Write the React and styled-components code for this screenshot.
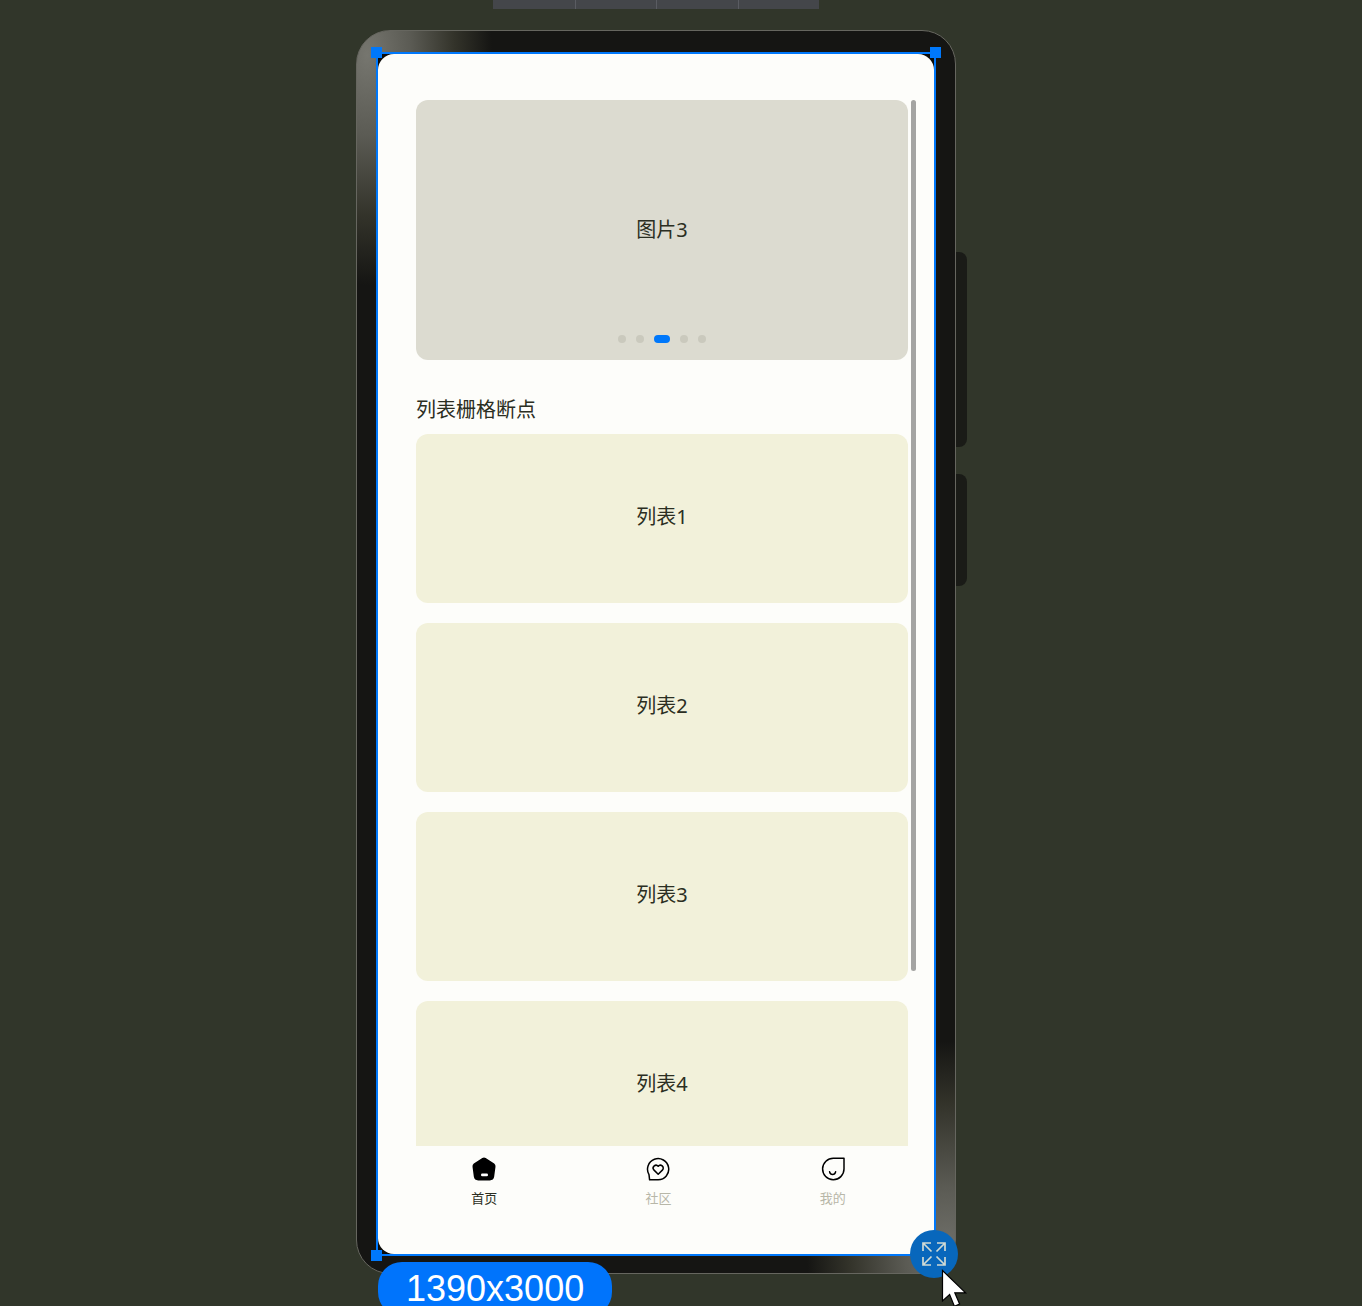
import React, { useState } from 'react';
import styled, { createGlobalStyle, css } from 'styled-components';

const colors = {
	canvas: '#31362a',
	frame: '#151513',
	frameEdge: '#66665f',
	screen: '#fdfdfa',
	banner: '#dcdbd0',
	item: '#f2f1da',
	text: '#2b2e22',
	muted: '#b8b7a8',
	select: '#0078fb',
};

const GlobalStyle = createGlobalStyle`
	* {
		box-sizing: border-box;
	}

	body {
		margin: 0;
		background: ${colors.canvas};
		font-family: 'Noto Sans', 'Noto Sans CJK SC', sans-serif;
		color: ${colors.text};
	}

	button {
		border: 0;
		padding: 0;
		background: none;
		color: inherit;
		font: inherit;
	}
`;

const Canvas = styled.main`
	display: flex;
	flex-direction: column;
	align-items: center;
	gap: 21px;
	height: 100vh;
	padding-right: 50px;
	overflow: hidden;
	background: ${colors.canvas};
`;

const TopBar = styled.div`
	display: grid;
	flex: none;
	grid-template-columns: repeat(4, 1fr);
	width: 326px;
	height: 9px;
	background: #44464a;
`;

const TopBarCell = styled.div`
	& + & {
		border-left: 1px solid #5a5c62;
	}
`;

const Phone = styled.div`
	position: relative;
	flex: none;
	width: 600px;
	max-width: 100%;
	padding: 21px 19px 17px;
	border: 1px solid ${colors.frameEdge};
	border-radius: 34px;
	background: radial-gradient(
			ellipse 125px 230px at 10px 24px,
			#76766f 0%,
			#5b5b54 35%,
			#33332a 70%,
			transparent 100%
		),
		radial-gradient(
			ellipse 140px 210px at 590px 1220px,
			#70706a 0%,
			#5b5b54 30%,
			#33332a 70%,
			transparent 100%
		),
		${colors.frame};
`;

const SideKey = styled.span`
	position: absolute;
	left: 100%;
	top: ${({ $top }) => $top}px;
	width: 12px;
	height: ${({ $length }) => $length}px;
	border-left: 1px solid ${colors.frameEdge};
	border-radius: 0 8px 8px 0;
	background: #1a1b17;
`;

const Selection = styled.div`
	position: relative;
	border: 2px solid ${colors.select};
	background: #0c0c0a;
`;

const Handle = styled.span`
	position: absolute;
	width: 11px;
	height: 11px;
	background: ${colors.select};

	${({ $corner }) => {
		const [v, h] = $corner.split(' ');

		return css`
			${v}: -7px;
			${h}: -7px;
		`;
	}}
`;

const Screen = styled.div`
	display: flex;
	flex-direction: column;
	width: 100%;
	aspect-ratio: 1390 / 3000;
	overflow: hidden;
	border-radius: 16px;
	background: ${colors.screen};
`;

const Content = styled.div`
	position: relative;
	flex: 1;
	min-height: 0;
	padding: 46px 26px 0 38px;
	overflow: hidden;
`;

const ScrollThumb = styled.span`
	position: absolute;
	top: 46px;
	right: 18px;
	width: 5px;
	height: 871px;
	border-radius: 3px;
	background: #a4a4a2;
`;

const Banner = styled.section`
	position: relative;
	display: flex;
	align-items: center;
	justify-content: center;
	height: 260px;
	padding-bottom: 4px;
	border-radius: 12px;
	background: ${colors.banner};
	font-size: 20px;
`;

const Dots = styled.div`
	position: absolute;
	left: 0;
	right: 0;
	bottom: 17px;
	display: flex;
	justify-content: center;
	gap: 10px;
`;

const Dot = styled.button`
	width: ${({ $active }) => ($active ? 16 : 8)}px;
	height: 8px;
	border-radius: 4px;
	background: ${({ $active }) => ($active ? colors.select : '#cac9bd')};
`;

const Title = styled.h2`
	margin: 36px 0 10px;
	font-size: 20px;
	font-weight: 400;
	line-height: 28px;
`;

const List = styled.ul`
	display: flex;
	flex-direction: column;
	gap: 20px;
	margin: 0;
	padding: 0;
	list-style: none;
`;

const Item = styled.li`
	display: flex;
	align-items: center;
	justify-content: center;
	height: 169px;
	padding-bottom: 6px;
	border-radius: 12px;
	background: ${colors.item};
	font-size: 20px;
`;

const Tabs = styled.nav`
	display: grid;
	flex: none;
	grid-template-columns: repeat(3, 1fr);
	height: 108px;
	padding: 11px 14px 0 19px;
`;

const Tab = styled.button`
	display: flex;
	flex-direction: column;
	align-items: center;
	gap: 8px;
	font-size: 13px;
	line-height: 18px;
	color: ${({ $active }) => ($active ? colors.text : colors.muted)};

	svg {
		color: #000;
	}
`;

const SizeLabel = styled.div`
	position: absolute;
	top: calc(100% + 8px);
	left: 0;
	padding: 0 28px;
	border-radius: 24px;
	background: #0074fc;
	font-family: 'Liberation Sans', Arial, sans-serif;
	font-size: 36px;
	line-height: 54px;
	color: #fff;
`;

const ResizeButton = styled.button`
	position: absolute;
	right: -24px;
	bottom: -24px;
	display: flex;
	align-items: center;
	justify-content: center;
	width: 48px;
	height: 48px;
	border-radius: 50%;
	background: #0867bc;
	color: #d0dad4;
`;

const Cursor = styled.svg`
	position: absolute;
	top: calc(100% + 15px);
	left: calc(100% + 7px);
`;

const HomeIcon = () => (
	<svg width='24' height='24' viewBox='0 0 24 24' aria-hidden='true'>
		<path
			fill='currentColor'
			d='M10.3 1.1Q12 .1 13.7 1.1L22.2 6.6Q23.8 7.8 23.5 9.8L22.2 19.6Q21.6 23.4 17.8 23.5H6.2Q2.4 23.4 1.8 19.6L.5 9.8Q.2 7.8 1.8 6.6Z'
		/>
		<rect x='9' y='16.6' width='7' height='2.6' rx='1.3' fill='#fff' />
	</svg>
);

const CommunityIcon = () => (
	<svg
		width='24'
		height='24'
		viewBox='0 0 24 24'
		fill='none'
		stroke='currentColor'
		strokeWidth='1.5'
		strokeLinejoin='round'
		aria-hidden='true'
	>
		<path d='M3.6 22.8 3 17.6A10.6 10.6 0 1 1 12.2 22.8Z' />
		<path d='M12.2 17.3 7.8 12.9A2.7 2.7 0 0 1 12.2 9.3 2.7 2.7 0 0 1 16.6 12.9Z' />
	</svg>
);

const MineIcon = () => (
	<svg
		width='24'
		height='24'
		viewBox='0 0 24 24'
		fill='none'
		stroke='currentColor'
		strokeWidth='1.5'
		strokeLinecap='round'
		aria-hidden='true'
	>
		<path d='M23 1.3H12.6A10.7 10.7 0 1 0 23 12Z' strokeLinejoin='round' />
		<path d='M8.6 14.8Q9.2 17.4 11.6 17.4T14.6 14.8' />
	</svg>
);

const ExpandIcon = () => (
	<svg
		width='24'
		height='24'
		viewBox='0 0 24 24'
		fill='none'
		stroke='currentColor'
		strokeWidth='1.7'
		aria-hidden='true'
	>
		<path d='M1 9V1H9M1 1 9.5 9.5M15 1H23V9M23 1 14.5 9.5M1 15V23H9M1 23 9.5 14.5M23 15V23H15M23 23 14.5 14.5' />
	</svg>
);

const slides = ['图片1', '图片2', '图片3', '图片4', '图片5'];
const items = ['列表1', '列表2', '列表3', '列表4'];
const tabs = [
	{ label: '首页', Icon: HomeIcon },
	{ label: '社区', Icon: CommunityIcon },
	{ label: '我的', Icon: MineIcon },
];

function App() {
	const [slide, setSlide] = useState(2);
	const [tab, setTab] = useState(0);

	return (
		<>
			<GlobalStyle />
			<Canvas>
				<TopBar>
					<TopBarCell />
					<TopBarCell />
					<TopBarCell />
					<TopBarCell />
				</TopBar>

				<Phone>
					<SideKey $top={221} $length={195} />
					<SideKey $top={443} $length={112} />

					<Selection>
						<Screen>
							<Content>
								<Banner>
									{slides[slide]}
									<Dots>
										{slides.map((name, index) => (
											<Dot
												key={name}
												type='button'
												aria-label={name}
												$active={index === slide}
												onClick={() => setSlide(index)}
											/>
										))}
									</Dots>
								</Banner>
								<Title>列表栅格断点</Title>
								<List>
									{items.map((name) => (
										<Item key={name}>{name}</Item>
									))}
								</List>
								<ScrollThumb />
							</Content>

							<Tabs>
								{tabs.map(({ label, Icon }, index) => (
									<Tab
										key={label}
										type='button'
										$active={index === tab}
										onClick={() => setTab(index)}
									>
										<Icon />
										{label}
									</Tab>
								))}
							</Tabs>
						</Screen>

						<Handle $corner='top left' />
						<Handle $corner='top right' />
						<Handle $corner='bottom left' />
						<SizeLabel>1390x3000</SizeLabel>
						<ResizeButton type='button' aria-label='Resize'>
							<ExpandIcon />
						</ResizeButton>
						<Cursor width='28' height='40' viewBox='0 0 28 40' aria-hidden='true'>
							<path
								d='M1.5 1.5V32L8.6 25.6 13.4 37.2 18.6 35 13.8 23.8H24.6Z'
								fill='#fff'
								stroke='#000'
								strokeWidth='1.2'
							/>
						</Cursor>
					</Selection>
				</Phone>
			</Canvas>
		</>
	);
}

export default App;
